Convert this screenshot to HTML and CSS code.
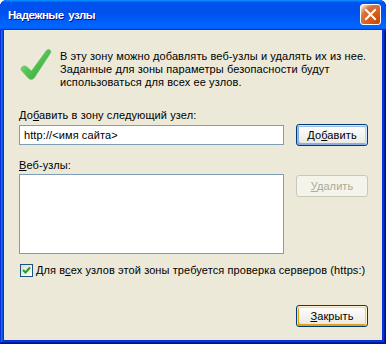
FILE: index.html
```html
<!DOCTYPE html>
<html lang="ru">
<head>
<meta charset="utf-8">
<title>Надежные узлы</title>
<link rel="stylesheet" href="styles.css">
</head>
<body>
<div class="window">
  <div class="titlebar">
    <span class="title">Надежные узлы</span>
    <span class="close" aria-label="Закрыть">
      <svg width="21" height="21" viewBox="0 0 21 21"><path d="M6 6 L15 15 M15 6 L6 15" stroke="#fff" stroke-width="2" stroke-linecap="square"/></svg>
    </span>
  </div>
  <div class="client">
    <div class="intro">
      <svg class="icon" width="32" height="32" viewBox="0 0 32 32">
        <defs>
          <linearGradient id="g" x1="0" y1="0" x2="1" y2="1">
            <stop offset="0" stop-color="#a6e8a6"/>
            <stop offset="0.45" stop-color="#55c655"/>
            <stop offset="1" stop-color="#2f9d2f"/>
          </linearGradient>
        </defs>
        <path d="M1 22 C0.5 19 4 16.5 7 19 L11.5 23 L26.5 2.5 C28.5 0.5 32 2 30.5 5 L14.5 29.5 C13 31.8 10 32 8.5 30.3 Z" fill="url(#g)" stroke="#5fb85f" stroke-width="0.6"/>
      </svg>
      <p class="intro-text">В эту зону можно добавлять веб-узлы и удалять их из нее. Заданные для зоны параметры безопасности будут использоваться для всех ее узлов.</p>
    </div>
    <div class="label first">До<u>б</u>авить в зону следующий узел:</div>
    <div class="row add-row">
      <div class="input">http://&lt;имя сайта&gt;</div>
      <button class="btn default">До<u>б</u>авить</button>
    </div>
    <div class="label second"><u>В</u>еб-узлы:</div>
    <div class="row list-row">
      <div class="listbox"></div>
      <button class="btn disabled"><u>У</u>далить</button>
    </div>
    <div class="check-row">
      <span class="checkbox">
        <svg width="11" height="11" viewBox="0 0 11 11"><path d="M2 5 L4.5 7.5 L9 2.5" fill="none" stroke="#21a121" stroke-width="2"/></svg>
      </span>
      <span>Для в<u>с</u>ех узлов этой зоны требуется проверка серверов (https:)</span>
    </div>
    <div class="footer">
      <button class="btn hover"><u>З</u>акрыть</button>
    </div>
  </div>
</div>
</body>
</html>
```
FILE: styles.css
```css
html, body {
  margin: 0;
  padding: 0;
  background: #ffffff;
}
body {
  width: 387px;
  height: 345px;
  overflow: hidden;
  font-family: "Liberation Sans", Arial, sans-serif;
  font-size: 11px;
  letter-spacing: 0.1px;
  color: #000;
}
.window {
  width: 386px;
  height: 344px;
  display: flex;
  flex-direction: column;
  background: #0831d9;
  border-radius: 7px 7px 0 0;
  box-shadow: inset -1px -1px #00138c, inset 1px 1px #0831d9, inset -2px -2px #001ea0, inset 2px 2px #166aee, inset -3px -3px #003bda, inset 3px 3px #0855dd;
}
.titlebar {
  height: 30px;
  flex: none;
  display: flex;
  align-items: center;
  justify-content: space-between;
  padding: 0 5px 0 8px;
  border-radius: 7px 7px 0 0;
  background: linear-gradient(180deg, #0997ff, #0053ee 8%, #0050ee 40%, #0066ff 88%, #0066ff 93%, #005bff 95%, #003dd7 96%, #003dd7);
  box-sizing: border-box;
}
.title {
  color: #fff;
  font-weight: bold;
  font-size: 11.5px;
  letter-spacing: -0.5px;
  word-spacing: 2px;
  text-shadow: 1px 1px #0f1089;
  padding-bottom: 1px;
}
.close {
  width: 21px;
  height: 21px;
  box-sizing: border-box;
  border: 1px solid #fff;
  border-radius: 3px;
  background: radial-gradient(circle at 90% 90%, #cc4600 0, #dc6527 55%, #cd7546 70%, #ffccb2 90%, #fff 100%);
  display: flex;
  align-items: center;
  justify-content: center;
  margin-bottom: 1px;
}
.close svg {
  display: block;
  margin: -1px;
}
.client {
  flex: 1;
  margin: 0 4px 4px 4px;
  background: #ece9d8;
  padding: 18px 14px 13px 15px;
  display: flex;
  flex-direction: column;
  line-height: 13px;
}
.intro {
  display: flex;
  align-items: flex-start;
}
.icon {
  flex: none;
  margin-left: 1px;
}
.intro-text {
  margin: 1.5px 0 0 8px;
  width: 310px;
}
.label {
  height: 13px;
  white-space: nowrap;
}
.label.first { margin-top: 20px; }
.label.second { margin-top: 13px; }
.row {
  display: flex;
  justify-content: space-between;
}
.add-row {
  margin-top: 2px;
  align-items: center;
  height: 22px;
}
.input {
  width: 265px;
  height: 20px;
  box-sizing: border-box;
  border: 1px solid #7f9db9;
  background: #fff;
  padding: 0 0 0 4px;
  line-height: 18px;
}
.list-row {
  margin-top: 2px;
  align-items: flex-start;
}
.listbox {
  width: 265px;
  height: 80px;
  box-sizing: border-box;
  border: 1px solid #7f9db9;
  background: #fff;
}
.btn {
  width: 72px;
  height: 22px;
  box-sizing: border-box;
  border: 1px solid #003c74;
  border-radius: 3px;
  background: linear-gradient(180deg, #ffffff, #ecebe6 86%, #d6d0c5);
  font-family: inherit;
  font-size: 11px;
  letter-spacing: 0.1px;
  color: #000;
  padding: 0;
  margin: 0;
}
.btn.default {
  box-shadow: inset -1px 1px #cee7ff, inset 1px 2px #98b8ea, inset -2px 2px #bcd4f6, inset 1px -1px #89ade4, inset 2px -2px #89ade4;
}
.btn.hover {
  box-shadow: inset -1px 1px #fff0cf, inset 1px 2px #fdd889, inset -2px 2px #fbc761, inset 2px -2px #e5a01a;
}
.btn.disabled {
  margin-top: 1px;
  border-color: #c9c7ba;
  background: #f5f4ea;
  color: #aca899;
}
.check-row {
  margin-top: 10px;
  display: flex;
  align-items: center;
  height: 13px;
  white-space: nowrap;
}
.checkbox {
  width: 13px;
  height: 13px;
  box-sizing: border-box;
  border: 1px solid #1c5180;
  background: linear-gradient(135deg, #dcdcd7, #ffffff);
  margin-left: 1px;
  margin-right: 3px;
  display: flex;
  align-items: center;
  justify-content: center;
  flex: none;
}
.checkbox svg { display: block; }
.footer {
  margin-top: auto;
  display: flex;
  justify-content: flex-end;
}
```
